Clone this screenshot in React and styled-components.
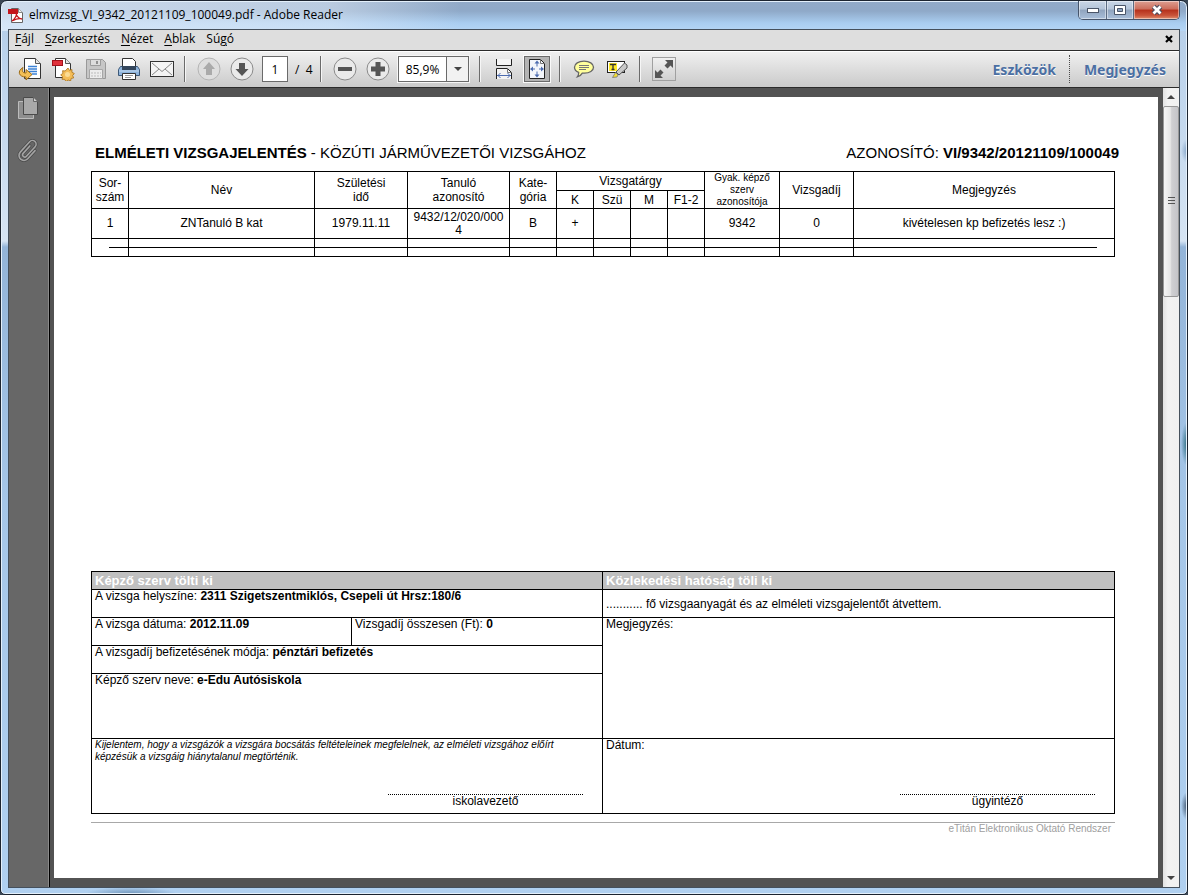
import React, { useState } from "react";
import styled, { createGlobalStyle, css } from "styled-components";

const uiFont = `"Open Sans", "Noto Sans", sans-serif`;
const docFont = `"Liberation Sans", Arial, sans-serif`;

const GlobalStyle = createGlobalStyle`
  * {
    box-sizing: border-box;
  }
  body {
    margin: 0;
    background: #3a4654;
    font-family: ${uiFont};
  }
  button, input {
    font-family: inherit;
    margin: 0;
    padding: 0;
  }
`;

// ---------- window frame ----------

const Window = styled.div`
  display: flex;
  flex-direction: column;
  min-height: 100vh;
  padding: 0 7px 6px;
  border: 1px solid #1c2430;
  border-radius: 7px 7px 5px 5px;
  box-shadow: inset 0 0 0 1px #e4f0fb;
  background:
    radial-gradient(ellipse 6px 22px at 100% 443px, #2c6c80, transparent),
    radial-gradient(ellipse 6px 14px at 100% 805px, #41566f, transparent),
    radial-gradient(ellipse 6px 12px at 100% 150px, #86a5c8, transparent),
    radial-gradient(ellipse 46px 7px at 130px 100%, #6f93b8, transparent),
    linear-gradient(90deg, rgba(226, 236, 248, 0.75) 0, rgba(226, 236, 248, 0.5) 330px, transparent 460px) 0 0 / 100% 30px no-repeat,
    linear-gradient(#92aac8 0, #8fa9c8 10px, #a9cdf0 22px, #b6d6f6 30px) 0 0 / 100% 30px no-repeat,
    linear-gradient(#b3cde9 0, #d6e4f3 240px, #93b4d8 246px, #a5c6e8 500px, #b0d0f0 100%);
`;

const TitleBar = styled.header`
  display: flex;
  align-items: center;
  height: 28px;
  gap: 5px;
`;

const TitleText = styled.h1`
  flex: 1;
  margin: 0;
  font-size: 12px;
  font-weight: 400;
  line-height: 16px;
  color: #000;
  white-space: nowrap;
`;

const Caption = styled.div`
  display: flex;
  align-self: flex-start;
  height: 19px;
  border: 1px solid #46546a;
  border-top: 0;
  border-radius: 0 0 5px 5px;
  overflow: hidden;
`;

const CaptionButton = styled.button`
  display: flex;
  align-items: center;
  justify-content: center;
  width: ${(p) => (p.$close ? 46 : 27)}px;
  border: 0;
  border-left: ${(p) => (p.$first ? "0" : "1px solid #5b6b82")};
  box-shadow: inset 0 0 0 1px rgba(255, 255, 255, 0.45);
  background: ${(p) =>
    p.$close
      ? "linear-gradient(#dd9f92 0, #cc6d5b 45%, #b5301b 50%, #c9543a 80%, #e08f6e 100%)"
      : "linear-gradient(#c9d6e6 0, #b4c4d8 45%, #90a4be 50%, #a9bfda 100%)"};
`;

const Client = styled.div`
  display: flex;
  flex-direction: column;
  flex: 1;
  border: 1px solid #45505c;
  background: #535353;
`;

// ---------- menu ----------

const MenuBar = styled.nav`
  display: flex;
  align-items: center;
  height: 20px;
  padding: 0 6px 2px;
  gap: 11px;
  background: #dedede;
`;

const MenuItem = styled.button`
  border: 0;
  background: none;
  font-size: 12px;
  line-height: 16px;
  color: #000;

  u {
    text-underline-offset: 2px;
  }
`;

const CloseDoc = styled(MenuItem)`
  display: flex;
  margin-left: auto;
`;

// ---------- toolbar ----------

const Toolbar = styled.div`
  display: flex;
  align-items: center;
  height: 38px;
  padding: 0 0 0 4px;
  border-top: 1px solid #2b2b2b;
  border-bottom: 1px solid #2b2b2b;
  box-shadow: inset 0 1px 0 #fff;
  background: linear-gradient(#f1f1f1, #cacaca);
`;

const ToolButton = styled.button`
  display: flex;
  align-items: center;
  justify-content: center;
  flex: none;
  width: 33px;
  height: 26px;
  border: 0;
  background: none;
`;

const Boxed = styled.span`
  display: flex;
  align-items: center;
  justify-content: center;
  width: ${(p) => (p.$active ? 26 : 24)}px;
  height: ${(p) => (p.$active ? 26 : 24)}px;
  border: 1px solid ${(p) => (p.$active ? "#6a6a6a" : "#a0a0a0")};
  background: ${(p) => (p.$active ? "#b4b4b4" : "linear-gradient(#f0f0f0, #d0d0d0)")};
  box-shadow: ${(p) => (p.$active ? "0 0 0 1px #fafafa" : "none")};
`;

const Separator = styled.span`
  flex: none;
  width: 2px;
  height: 26px;
  margin: 0 6px;
  border-left: 1px solid #6b6b6b;
  border-right: 1px solid #f6f6f6;
`;

const fieldBox = css`
  height: 26px;
  border: 1px solid #6a6a6a;
  background: #fff;
  font-size: 12px;
  color: #000;
`;

const PageInput = styled.input`
  ${fieldBox}
  width: 26px;
  margin-left: 4px;
  text-align: center;
`;

const PageTotal = styled.span`
  width: 26px;
  padding-left: 7px;
  font-size: 12px;
  white-space: pre;
`;

const ZoomBox = styled.div`
  ${fieldBox}
  display: flex;
  width: 71px;
  margin: 0 4px;
  box-shadow: 0 0 0 1px #f6f6f6;
`;

const ZoomInput = styled.input`
  flex: 1;
  min-width: 0;
  border: 0;
  font-size: 12px;
  text-align: center;
`;

const ZoomArrow = styled.button`
  display: flex;
  align-items: center;
  justify-content: center;
  width: 22px;
  border: 0;
  border-left: 1px solid #6a6a6a;
  background: #f2f2f2;
`;

const PaneLinks = styled.div`
  display: flex;
  align-items: center;
  height: 28px;
  margin-left: auto;
`;

const PaneButton = styled.button`
  height: 28px;
  padding: 0 13px 0 14px;
  border: 0;
  border-left: ${(p) => (p.$divided ? "1px dotted #4a4a4a" : "0")};
  background: none;
  font-family: "Noto Sans", sans-serif;
  font-size: 14px;
  font-weight: 700;
  color: #4b6fa3;
  text-shadow: 0 1px 0 #fff;
`;

// ---------- workspace ----------

const Workspace = styled.div`
  display: flex;
  flex: 1;
`;

const Sidebar = styled.aside`
  display: flex;
  flex-direction: column;
  align-items: center;
  width: 41px;
  padding: 8px 2px 0 0;
  gap: 18px;
  background: #676767;
  border-right: 1px solid #000;
  box-shadow: inset -1px 0 0 #8a8a8a;
`;

const SideButton = styled.button`
  display: flex;
  border: 0;
  background: none;
`;

const Viewer = styled.main`
  display: flex;
  flex: 1;
  padding: 9px 5px 9px 4px;
  background: #535353;
`;

const Scrollbar = styled.div`
  display: flex;
  flex-direction: column;
  width: 16px;
  background: linear-gradient(90deg, #e2e2e2, #f2f2f2 30%, #f0f0f0);
`;

const ScrollArrow = styled.button`
  display: flex;
  align-items: center;
  justify-content: center;
  height: 18px;
  border: 0;
  background: none;
`;

const ScrollTrack = styled.div`
  flex: 1;
`;

const ScrollThumb = styled.div`
  display: flex;
  align-items: center;
  justify-content: center;
  height: 25%;
  border: 1px solid #979797;
  border-radius: 2px;
  background: linear-gradient(90deg, #f5f5f5, #e6e6e6 45%, #cfcfd2 55%, #c4c4c8);
`;

// ---------- the document ----------

const Page = styled.article`
  display: flex;
  flex-direction: column;
  flex: 1;
  padding-top: 48px;
  background: #fff;
  color: #000;
  font-family: ${docFont};
  font-size: 12px;
`;

const PageHead = styled.div`
  display: flex;
  justify-content: space-between;
  margin-bottom: 10px;
  padding: 0 39px 0 41px;
  font-size: 15px;
  line-height: 16px;
  white-space: nowrap;
`;

const PageBody = styled.div`
  display: flex;
  flex-direction: column;
  flex: 1;
  padding: 0 43px 0 37px;
`;

const TableWrap = styled.div`
  position: relative;
`;

const ExamTable = styled.table`
  width: 100%;
  table-layout: fixed;
  border-collapse: collapse;
  line-height: 14px;
  text-align: center;

  th, td {
    padding: 0;
    border: 1px solid #000;
    font-weight: 400;
  }
`;

const Row = styled.tr`
  height: ${(p) => p.$h}px;
`;

const SmallTh = styled.th`
  font-size: 10px;
  line-height: 12px;
`;

const DataCell = styled.div`
  padding: 0 4px;
  line-height: 13px;
  overflow-wrap: anywhere;
`;

// crosses out the unused rows
const StrikeLine = styled.div`
  position: absolute;
  left: 18px;
  right: 18px;
  bottom: 9px;
  height: 1px;
  background: #000;
`;

const Form = styled.section`
  display: grid;
  grid-template-columns: 1fr 1fr;
  margin-top: auto;
  border: 1px solid #000;
  border-bottom: 0;
`;

const FormColumn = styled.div`
  display: flex;
  flex-direction: column;
  border-right: ${(p) => (p.$divided ? "1px solid #000" : "0")};
`;

const FormTitle = styled.h2`
  margin: 0;
  height: 18px;
  padding: 0 3px;
  border-bottom: 1px solid #000;
  background: #c0c0c0;
  color: #fff;
  font-size: 13px;
  line-height: 17px;
`;

const Cell = styled.div`
  display: flex;
  flex-direction: column;
  justify-content: ${(p) => (p.$middle ? "center" : "space-between")};
  min-height: ${(p) => p.$h}px;
  padding: 0 3px;
  border-bottom: 1px solid #000;
  line-height: 12px;
`;

const SplitRow = styled.div`
  display: grid;
  grid-template-columns: 260px 1fr;

  ${Cell}:first-child {
    border-right: 1px solid #000;
  }
`;

const Statement = styled.p`
  margin: 0;
  font-size: 10px;
  font-style: italic;
  line-height: 12px;
`;

const Signature = styled.div`
  align-self: flex-end;
  width: 195px;
  margin: 0 16px 5px 0;
  border-top: 1px dotted #000;
  line-height: 13px;
  text-align: center;
`;

const PageFoot = styled.footer`
  margin: 8px 0 43px;
  padding-right: 4px;
  border-top: 1px solid #a8a8a8;
  color: #a0a0a0;
  font-size: 10px;
  line-height: 12px;
  text-align: right;
`;

// ---------- icons ----------

const PdfIcon = () => (
  <svg width="16" height="17" viewBox="0 0 16 17">
    <path d="M3.500 1.500h7l4 4v10h-11z" fill="#fff" stroke="#666" />
    <path d="M10.500 1.500v4h4" fill="#eee" stroke="#888" />
    <rect x="0" y="2" width="10" height="5" fill="#c4161c" />
    <path d="M4 14c3-2 5-6 4.500-8-1 1 1.500 6 5.500 6-3-1-7 .5-10 2z" fill="none" stroke="#c4161c" strokeWidth="1.300" />
  </svg>
);

const OpenIcon = () => (
  <svg width="24" height="24" viewBox="0 0 24 24">
    <path d="M6.500 1.500h11l5 5v15h-16z" fill="#fff" stroke="#333" />
    <path d="M17.500 1.500v5h5" fill="#e5e5e5" stroke="#555" />
    <path d="M10 9.500h9M10 12h9M10 14.500h9M14 17h5" stroke="#3d82d6" strokeWidth="1.300" />
    <path d="M5 10.500c-6 3.500-4.500 9.500 3 9.500v3l6-5.500-6-5v3.500c-3.500 0-4.500-2-3-5.500z" fill="#f3bf55" stroke="#9c6a14" />
  </svg>
);

const CreateIcon = () => (
  <svg width="24" height="24" viewBox="0 0 24 24">
    <path d="M4.500 1.500h10l5 5v14h-15z" fill="#fff" stroke="#333" />
    <path d="M14.500 1.500v5h5" fill="#e5e5e5" stroke="#555" />
    <rect x="1.500" y="3.500" width="10" height="5" fill="#e0323c" stroke="#a3121b" />
    <path d="M17 11l1.400 2.300 2.600-.7-.1 2.700 2.400 1.200-1.700 2 1.100 2.400-2.600.5-.5 2.600-2.500-1-2.100 1.600-1.300-2.300-2.700 0 .6-2.600-1.900-1.800 2.200-1.500-.3-2.700 2.600.3z" fill="#f4bd58" stroke="#a87018" strokeWidth=".8" />
    <circle cx="16.500" cy="17.500" r="2.500" fill="#fbdc94" />
  </svg>
);

const SaveIcon = () => (
  <svg width="22" height="22" viewBox="0 0 22 22">
    <path d="M1.500 1.500h16l3 3v16h-19z" fill="#c6c6c6" stroke="#999" />
    <path d="M5.500 1.500h10v6h-10z" fill="#ddd" stroke="#9c9c9c" />
    <rect x="11" y="3" width="2" height="3" fill="#909090" />
    <path d="M4.500 11.500h13v9h-13z" fill="#ececec" stroke="#a6a6a6" />
    <path d="M6 15h10M6 18h10" stroke="#bbb" strokeDasharray="2 1" />
  </svg>
);

const PrintIcon = () => (
  <svg width="24" height="24" viewBox="0 0 24 24">
    <path d="M5.500 10V1.500h10l3 3V10" fill="#fff" stroke="#333" />
    <path d="M3.500 9.500h17l2 3v6h-21v-6z" fill="#8fb4dc" stroke="#3c5878" />
    <path d="M5 9h14v4H5z" fill="#34465c" />
    <path d="M2 14h20" stroke="#c5dbf0" />
    <path d="M5.500 16.500h13v6h-13z" fill="#fff" stroke="#333" />
    <path d="M8 18.500h8M8 20.500h6" stroke="#999" />
  </svg>
);

const MailIcon = () => (
  <svg width="24" height="18" viewBox="0 0 24 18">
    <rect x=".5" y="1.500" width="23" height="15" fill="#f4f4f4" stroke="#333" />
    <path d="M2 3l10 8.500L22 3M2 15l7-6M22 15l-7-6" fill="none" stroke="#888" />
  </svg>
);

const RoundIcon = ({ disabled, children }) => (
  <svg width="24" height="24" viewBox="0 0 24 24">
    <circle cx="12" cy="12" r="11" fill={disabled ? "#dedede" : "#eaeaea"} stroke={disabled ? "#b4b4b4" : "#8a8a8a"} />
    <g fill={disabled ? "#aaa" : "#555"}>{children}</g>
  </svg>
);

const FitWidthIcon = () => (
  <svg width="18" height="22" viewBox="0 0 18 22">
    <path d="M1.500 1v6.500h15V1" fill="#f4f4f4" stroke="#222" />
    <path d="M1.500 21V10.500h11l4 4V21" fill="#f4f4f4" stroke="#222" />
    <path d="M12.500 10.500v4h4" fill="none" stroke="#777" />
    <path d="M2 17.500h14M5.500 15l-2.500 2.500 2.500 2.500M12.500 15l2.500 2.500-2.500 2.500" fill="none" stroke="#4d6cb0" />
  </svg>
);

const FitPageIcon = () => (
  <svg width="18" height="20" viewBox="0 0 18 20">
    <path d="M1.500.5h11l4 4v15h-15z" fill="#f4f6fb" stroke="#222" />
    <path d="M12.500.5v4h4" fill="none" stroke="#777" />
    <path d="M9 3v4.500M9 17v-4.500M3 10h4M15 10h-4" stroke="#4d6cb0" />
    <path d="M9 1.500l-2.500 3h5zM9 18.500l-2.500-3h5zM2 10l3-2.500v5zM16 10l-3-2.500v5z" fill="#4d6cb0" />
  </svg>
);

const CommentIcon = () => (
  <svg width="22" height="18" viewBox="0 0 22 18">
    <path d="M11 1.200c5.500 0 9.500 2.500 9.500 6s-4 6-9 6c-.8 0-1.500 0-2.200-.1-1 1.900-2.800 3.200-5 3.700 1-1.300 1.500-2.700 1.400-4.400C3 11.300 1.500 9.500 1.500 7.200c0-3.500 4-6 9.500-6z" fill="#ffff9c" stroke="#666" strokeWidth="1.300" />
    <path d="M6 5.500h10M6 7.500h10M6 9.500h7" stroke="#777" />
  </svg>
);

const HighlightIcon = () => (
  <svg width="22" height="20" viewBox="0 0 22 20">
    <rect x="1.500" y="2.500" width="17" height="11" fill="#fff" stroke="#222" />
    <rect x="3" y="4" width="8" height="8" fill="#ffe927" />
    <path d="M4 5.500h6M7 5.500v5M5.500 10.500h3" stroke="#333" strokeWidth="1.300" />
    <path d="M18.500 4l2.500 2v3l-8 7-3-3z" fill="#c9c9c9" stroke="#555" />
    <path d="M9.500 13.500l2.500 2.500-1 2-4.500.5z" fill="#f5e030" stroke="#777" strokeWidth=".8" />
  </svg>
);

const ExpandIcon = () => (
  <svg width="20" height="20" viewBox="0 0 20 20" fill="#555">
    <path d="M11 1h8v8l-2.500-2.500L13.500 9.500l-3-3 3-3z" />
    <path d="M9 19H1v-8l2.500 2.500 3-3 3 3-3 3z" />
  </svg>
);

const PagesIcon = () => (
  <svg width="22" height="24" viewBox="0 0 22 24">
    <path d="M1.500 5.500h15v17h-15z" fill="#8e8e8e" stroke="#bcbcbc" />
    <path d="M6.500 1.500h10l4 4v13h-14z" fill="#a9a9a9" stroke="#4a4a4a" />
    <path d="M16.500 1.500v4h4" fill="#d0d0d0" stroke="#666" />
  </svg>
);

const ClipIcon = () => (
  <svg width="24" height="26" viewBox="0 0 24 26" fill="none" strokeLinecap="round">
    <g transform="rotate(42 12 13)">
      <path d="M17 8v11a5 5 0 0 1-10 0V5a3.700 3.700 0 0 1 7.400 0V18a2.200 2.200 0 0 1-4.400 0V8" stroke="#484848" strokeWidth="3" />
      <path d="M17 8v11a5 5 0 0 1-10 0V5a3.700 3.700 0 0 1 7.400 0V18a2.200 2.200 0 0 1-4.400 0V8" stroke="#a4a4a4" strokeWidth="1.600" />
    </g>
  </svg>
);

const Triangle = ({ up }) => (
  <svg width="8" height="4" viewBox="0 0 8 4">
    <path d={up ? "M0 4l4-4 4 4z" : "M0 0h8l-4 4z"} fill="#444" />
  </svg>
);

const MinimizeIcon = () => (
  <svg width="12" height="6" viewBox="0 0 12 6">
    <rect x=".5" y="1.500" width="11" height="4" fill="#fff" stroke="#4a5568" />
  </svg>
);

const MaximizeIcon = () => (
  <svg width="12" height="10" viewBox="0 0 12 10">
    <path d="M.5.5h11v9H.5z" fill="#fff" stroke="#4a5568" />
    <path d="M3.500 3.500h5v3h-5z" fill="#8fa4c0" stroke="#4a5568" />
  </svg>
);

const CrossIcon = () => (
  <svg width="14" height="12" viewBox="0 0 14 12">
    <path d="M3.500 2.500l7 7M10.500 2.500l-7 7" stroke="#4d4d5e" strokeWidth="5" />
    <path d="M3.500 2.500l7 7M10.500 2.500l-7 7" stroke="#fff" strokeWidth="2.800" />
  </svg>
);

const SmallCross = () => (
  <svg width="8" height="8" viewBox="0 0 8 8">
    <path d="M1 1l6 6M7 1L1 7" stroke="#000" strokeWidth="2.200" />
  </svg>
);

// ---------- data ----------

const menu = [
  ["F", "ájl"],
  ["S", "zerkesztés"],
  ["N", "ézet"],
  ["A", "blak"],
  ["S", "ú", "g", "ó"],
];

const columns = [37, 186, 93, 102, 47, 37, 37, 37, 37, 75, 74];
const subjects = ["K", "Szü", "M", "F1-2"];
const exam = [
  "1",
  "ZNTanuló B kat",
  "1979.11.11",
  "9432/12/020/0004",
  "B",
  "+",
  "",
  "",
  "",
  "9342",
  "0",
  "kivételesen kp befizetés lesz :)",
];

const ExamSheet = () => (
  <TableWrap>
    <ExamTable>
      <colgroup>
        {columns.map((w, i) => (
          <col key={i} width={w} />
        ))}
        <col />
      </colgroup>
      <thead>
        <Row $h={19}>
          <th rowSpan={2}>Sor-<br />szám</th>
          <th rowSpan={2}>Név</th>
          <th rowSpan={2}>Születési<br />idő</th>
          <th rowSpan={2}>Tanuló<br />azonosító</th>
          <th rowSpan={2}>Kate-<br />gória</th>
          <th colSpan={4}>Vizsgatárgy</th>
          <SmallTh rowSpan={2}>Gyak. képző<br />szerv<br />azonosítója</SmallTh>
          <th rowSpan={2}>Vizsgadíj</th>
          <th rowSpan={2}>Megjegyzés</th>
        </Row>
        <Row $h={18}>
          {subjects.map((s) => (
            <th key={s}>{s}</th>
          ))}
        </Row>
      </thead>
      <tbody>
        <Row $h={30}>
          {exam.map((value, i) => (
            <td key={i}>
              <DataCell>{value}</DataCell>
            </td>
          ))}
        </Row>
        <Row $h={18}>
          {exam.map((_, i) => (
            <td key={i} />
          ))}
        </Row>
      </tbody>
    </ExamTable>
    <StrikeLine />
  </TableWrap>
);

const ExamForm = () => (
  <Form>
    <FormColumn $divided>
      <FormTitle>Képző szerv tölti ki</FormTitle>
      <Cell $h={28}>
        <span>A vizsga helyszíne: <b>2311 Szigetszentmiklós, Csepeli út Hrsz:180/6</b></span>
      </Cell>
      <SplitRow>
        <Cell $h={28}>
          <span>A vizsga dátuma: <b>2012.11.09</b></span>
        </Cell>
        <Cell $h={28}>
          <span>Vizsgadíj összesen (Ft): <b>0</b></span>
        </Cell>
      </SplitRow>
      <Cell $h={28}>
        <span>A vizsgadíj befizetésének módja: <b>pénztári befizetés</b></span>
      </Cell>
      <Cell $h={65}>
        <span>Képző szerv neve: <b>e-Edu Autósiskola</b></span>
      </Cell>
      <Cell $h={75}>
        <Statement>
          Kijelentem, hogy a vizsgázók a vizsgára bocsátás feltételeinek megfelelnek, az elméleti vizsgához előírt
          <br />
          képzésük a vizsgáig hiánytalanul megtörténik.
        </Statement>
        <Signature>iskolavezető</Signature>
      </Cell>
    </FormColumn>
    <FormColumn>
      <FormTitle>Közlekedési hatóság töli ki</FormTitle>
      <Cell $h={28} $middle>........... fő vizsgaanyagát és az elméleti vizsgajelentőt átvettem.</Cell>
      <Cell $h={121}>Megjegyzés:</Cell>
      <Cell $h={75}>
        <span>Dátum:</span>
        <Signature>ügyintéző</Signature>
      </Cell>
    </FormColumn>
  </Form>
);

const App = () => {
  const [page, setPage] = useState("1");
  const [zoom, setZoom] = useState("85,9%");

  return (
    <>
      <GlobalStyle />
      <Window>
        <TitleBar>
          <PdfIcon />
          <TitleText>elmvizsg_VI_9342_20121109_100049.pdf - Adobe Reader</TitleText>
          <Caption>
            <CaptionButton $first aria-label="Kis méret"><MinimizeIcon /></CaptionButton>
            <CaptionButton aria-label="Teljes méret"><MaximizeIcon /></CaptionButton>
            <CaptionButton $close aria-label="Bezárás"><CrossIcon /></CaptionButton>
          </Caption>
        </TitleBar>
        <Client>
          <MenuBar>
            {menu.map(([first, rest, key, tail]) => (
              <MenuItem key={first + rest}>
                {key ? <>{first}{rest}<u>{key}</u>{tail}</> : <><u>{first}</u>{rest}</>}
              </MenuItem>
            ))}
            <CloseDoc aria-label="Dokumentum bezárása"><SmallCross /></CloseDoc>
          </MenuBar>
          <Toolbar>
            <ToolButton aria-label="Megnyitás"><OpenIcon /></ToolButton>
            <ToolButton aria-label="PDF létrehozása"><CreateIcon /></ToolButton>
            <ToolButton aria-label="Mentés"><SaveIcon /></ToolButton>
            <ToolButton aria-label="Nyomtatás"><PrintIcon /></ToolButton>
            <ToolButton aria-label="E-mail"><MailIcon /></ToolButton>
            <Separator />
            <ToolButton aria-label="Előző oldal">
              <RoundIcon disabled><path d="M12 5l6 7h-3v6H9v-6H6z" /></RoundIcon>
            </ToolButton>
            <ToolButton aria-label="Következő oldal">
              <RoundIcon><path d="M12 19l6.500-7H15V6H9v6H5.500z" /></RoundIcon>
            </ToolButton>
            <PageInput aria-label="Oldal" value={page} onChange={(e) => setPage(e.target.value)} />
            <PageTotal>/  4</PageTotal>
            <Separator />
            <ToolButton aria-label="Kicsinyítés">
              <RoundIcon><rect x="5" y="10" width="14" height="4" /></RoundIcon>
            </ToolButton>
            <ToolButton aria-label="Nagyítás">
              <RoundIcon><path d="M9.500 5h5v4.500H19v5h-4.500V19h-5v-4.500H5v-5h4.500z" /></RoundIcon>
            </ToolButton>
            <ZoomBox>
              <ZoomInput aria-label="Nagyítás mértéke" value={zoom} onChange={(e) => setZoom(e.target.value)} />
              <ZoomArrow aria-label="Nagyítási lista"><Triangle /></ZoomArrow>
            </ZoomBox>
            <Separator />
            <ToolButton aria-label="Szélességhez igazítás"><FitWidthIcon /></ToolButton>
            <ToolButton aria-label="Teljes oldal"><Boxed $active><FitPageIcon /></Boxed></ToolButton>
            <Separator />
            <ToolButton aria-label="Jegyzet"><CommentIcon /></ToolButton>
            <ToolButton aria-label="Szövegkiemelés"><HighlightIcon /></ToolButton>
            <Separator />
            <ToolButton aria-label="Teljes képernyő"><Boxed><ExpandIcon /></Boxed></ToolButton>
            <PaneLinks>
              <PaneButton>Eszközök</PaneButton>
              <PaneButton $divided>Megjegyzés</PaneButton>
            </PaneLinks>
          </Toolbar>
          <Workspace>
            <Sidebar>
              <SideButton aria-label="Oldalképek"><PagesIcon /></SideButton>
              <SideButton aria-label="Mellékletek"><ClipIcon /></SideButton>
            </Sidebar>
            <Viewer>
              <Page>
                <PageHead>
                  <span><b>ELMÉLETI VIZSGAJELENTÉS</b> - KÖZÚTI JÁRMŰVEZETŐI VIZSGÁHOZ</span>
                  <span>AZONOSÍTÓ: <b>VI/9342/20121109/100049</b></span>
                </PageHead>
                <PageBody>
                  <ExamSheet />
                  <ExamForm />
                  <PageFoot>eTitán Elektronikus Oktató Rendszer</PageFoot>
                </PageBody>
              </Page>
            </Viewer>
            <Scrollbar>
              <ScrollArrow aria-label="Fel"><Triangle up /></ScrollArrow>
              <ScrollTrack>
                <ScrollThumb>
                  <svg width="7" height="8" viewBox="0 0 7 8">
                    <path d="M0 .5h7M0 3.500h7M0 6.500h7" stroke="#555" />
                  </svg>
                </ScrollThumb>
              </ScrollTrack>
              <ScrollArrow aria-label="Le"><Triangle /></ScrollArrow>
            </Scrollbar>
          </Workspace>
        </Client>
      </Window>
    </>
  );
};

export default App;
